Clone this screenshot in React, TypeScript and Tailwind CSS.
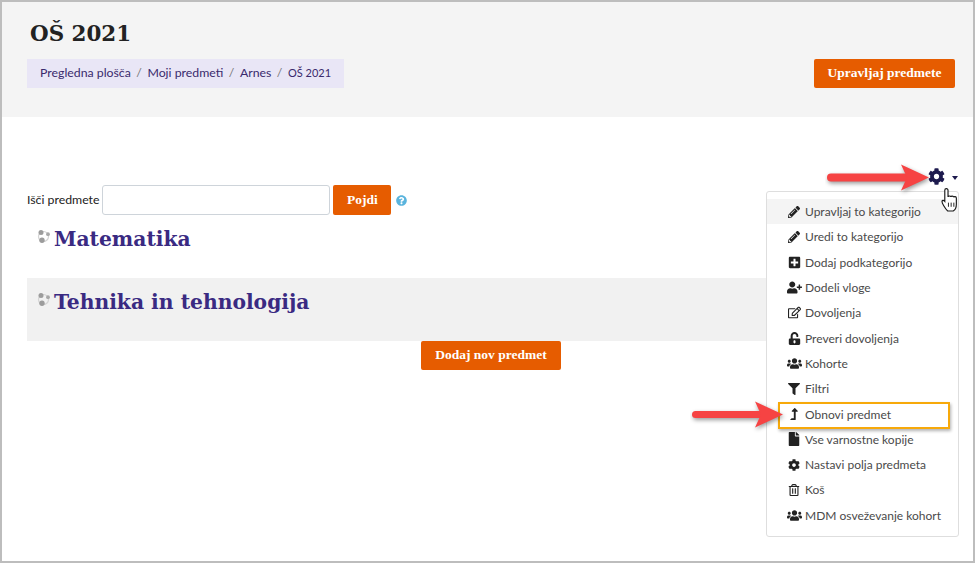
import React from "react";
import {
  FaPencilAlt, FaPlusSquare, FaUserPlus, FaRegEdit, FaUnlockAlt, FaUsers, FaFilter,
  FaLevelUpAlt, FaFile, FaCog, FaRegTrashAlt, FaQuestionCircle,
} from "react-icons/fa";

const SANS = "font-['Lato','Noto_Sans',sans-serif]";
const SERIF = "font-['DejaVu_Serif','Liberation_Serif',serif]";
const BTN = "font-['Liberation_Serif','DejaVu_Serif',serif]";

const items: [React.ComponentType<{ size?: number; className?: string }>, string, number][] = [
  [FaPencilAlt, "Upravljaj to kategorijo", 12],
  [FaPencilAlt, "Uredi to kategorijo", 12],
  [FaPlusSquare, "Dodaj podkategorijo", 13],
  [FaUserPlus, "Dodeli vloge", 15],
  [FaRegEdit, "Dovoljenja", 13],
  [FaUnlockAlt, "Preveri dovoljenja", 13],
  [FaUsers, "Kohorte", 15],
  [FaFilter, "Filtri", 12],
  [FaLevelUpAlt, "Obnovi predmet", 12],
  [FaFile, "Vse varnostne kopije", 14],
  [FaCog, "Nastavi polja predmeta", 12],
  [FaRegTrashAlt, "Koš", 12],
  [FaUsers, "MDM osveževanje kohort", 15],
];

function CatIcon() {
  return (
    <svg width="13" height="13" viewBox="0 0 13 13" className="mt-[6px] mr-[4px] shrink-0">
      <circle cx="6.5" cy="6.5" r="5" fill="none" stroke="#d4d4d4" strokeWidth="1.2" />
      <circle cx="4" cy="2.6" r="2.5" fill="#9c9c9c" />
      <circle cx="11" cy="4.2" r="1.9" fill="#a8a8a8" />
      <circle cx="5" cy="10.2" r="2.7" fill="#9c9c9c" />
    </svg>
  );
}

function Arrow({ className, w, t }: { className: string; w: number; t: number }) {
  return (
    <svg width={w + 10} height="40" viewBox={`0 0 ${w + 10} 40`} className={className}>
      <g className="drop-shadow-[1px_2px_2px_rgba(0,0,0,0.4)]">
        <rect x="2" y={19.5 - t / 2} width={w - 22} height={t} rx={t / 2} fill="#f64343" />
        <polygon points={`${w - 28},6.500 ${w},19.500 ${w - 28},32.500 ${w - 22},19.500`} fill="#f64343" />
      </g>
    </svg>
  );
}

function HandCursor() {
  return (
    <svg width="18" height="25" viewBox="0 0 17 24" className="absolute left-[939px] top-[185px]">
      <path
        d="M5 1.500c1 0 1.600.7 1.600 1.700v6.300c0-1 2.600-1.200 2.800 0 .1-1 2.500-1 2.700.3.3-.9 2.400-.8 2.500.7v6c0 2.600-1.200 5.500-3 6.500H6.300C5 22 3.800 20.200 2.500 18 1.600 16.500.7 15 .8 13.800c.2-1.200 1.700-1.200 2.700 0V3.200C3.500 2.200 4 1.500 5 1.500z"
        fill="#fff"
        stroke="#1a1a1a"
        strokeWidth="1.100"
      />
      <path d="M7 15v4M9.600 15v4M12.200 15v4" stroke="#1a1a1a" strokeWidth="0.900" />
    </svg>
  );
}

export default function App() {
  return (
    <div className={`relative w-[975px] h-[563px] overflow-hidden bg-white border-2 border-[#bdbdbd] ${SANS}`}>
      <header className="h-[115px] bg-[#f4f4f4] pl-[25px] pr-[18px] pt-[14px] flex justify-between">
        <div>
          <h1 className={`pl-[3px] text-[21.400px] leading-[36px] font-bold text-[#222] ${SERIF}`}>OŠ 2021</h1>
          <nav className="mt-[7px] h-[29px] w-[317px] bg-[#e9e6f6] pl-[13px] flex items-center text-[12.300px] text-[#3a2a6d] whitespace-nowrap">
            <span>Pregledna plošča</span>
            <span className="mx-[5.500px] text-[#777]">/</span>
            <span>Moji predmeti</span>
            <span className="mx-[5.500px] text-[#777]">/</span>
            <span>Arnes</span>
            <span className="mx-[5.500px] text-[#777]">/</span>
            <span className="text-[11px]">OŠ 2021</span>
          </nav>
        </div>
        <button className={`mt-[43px] h-[29px] w-[141px] rounded-[2px] bg-[#e65c00] text-white text-[13.500px] font-bold ${BTN}`}>
          Upravljaj predmete
        </button>
      </header>

      <main className="pl-[25px] pr-[18px]">
        <div className="h-[68px]" />
        <div className="flex items-center h-[30px] text-[12.300px] text-[#222]">
          <span>Išči predmete</span>
          <input className="ml-[3px] h-[30px] w-[228px] rounded-[3px] border border-[#ced4da] bg-white" />
          <button className={`ml-[3px] h-[30px] w-[58px] rounded-[2px] bg-[#e65c00] text-white text-[13.500px] font-bold ${BTN}`}>
            Pojdi
          </button>
          <FaQuestionCircle className="ml-[5px] text-[11px] text-[#5ab4dd]" />
        </div>
        <div className="flex h-[63px] pl-[10px] pt-[9px]">
          <CatIcon />
          <a className={`text-[20.300px] leading-[30px] font-bold text-[#3a2a82] ${SERIF}`}>Matematika</a>
        </div>
        <div className="flex h-[63px] bg-[#f1f1f1] pl-[10px] pt-[9px]">
          <CatIcon />
          <a className={`text-[20.300px] leading-[30px] font-bold text-[#3a2a82] ${SERIF}`}>Tehnika in tehnologija</a>
        </div>
        <div className="flex justify-center">
          <button className={`h-[29px] w-[140px] rounded-[2px] bg-[#e65c00] text-white text-[13.500px] font-bold ${BTN}`}>
            Dodaj nov predmet
          </button>
        </div>
      </main>

      <div className="absolute left-[926px] top-[166px] flex items-center text-[#1d1a4e]">
        <FaCog className="text-[17px]" />
        <span className="ml-[7px] mt-[2px] w-0 h-0 border-x-[3.500px] border-x-transparent border-t-[4px] border-t-[#1d1a4e]" />
      </div>

      <div className="absolute left-[764px] top-[189px] w-[193px] h-[346px] bg-white border border-[#dedede] rounded-[3px] py-[7px] text-[12px] text-[#4a4a4a]">
        {items.map(([Icon, label, size], i) => (
          <div key={label} className={`flex items-center h-[25.300px] pl-[19px] whitespace-nowrap ${i === 0 ? "bg-[#f4f4f4]" : ""}`}>
            <span className="w-[19px] flex justify-center pr-[3px]"><Icon size={size} className="text-[#222]" /></span>
            <span className="pt-[1px]">{label}</span>
          </div>
        ))}
      </div>

      <div className="absolute left-[776px] top-[400px] w-[172px] h-[27px] border-2 border-[#f7a90a] shadow-[1px_2px_3px_rgba(0,0,0,0.3)]" />
      <Arrow className="absolute left-[823px] top-[156px]" w={104} t={8} />
      <Arrow className="absolute left-[688px] top-[393px]" w={93} t={7} />
      <HandCursor />
    </div>
  );
}
